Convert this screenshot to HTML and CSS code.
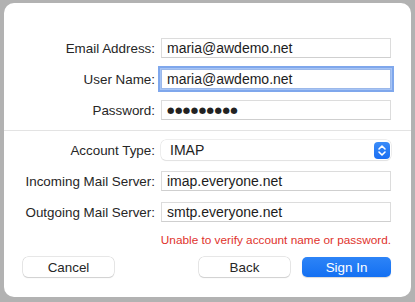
FILE: index.html
```html
<!DOCTYPE html>
<html lang="en">
<head>
    <meta charset="UTF-8">
    <meta name="viewport" content="width=device-width, initial-scale=1.0">
    <title>Add Account</title>
<link rel="stylesheet" href="styles.css">
</head>
<body>
    <div class="dialog">
        <div class="section">
            <div class="row">
                <label for="email">Email Address:</label>
                <input type="text" id="email" value="maria@awdemo.net">
            </div>
            <div class="row">
                <label for="userName">User Name:</label>
                <input type="text" id="userName" class="focused" value="maria@awdemo.net">
            </div>
            <div class="row">
                <label for="password">Password:</label>
                <input type="text" id="password" class="secret" value="●●●●●●●●●">
            </div>
        </div>

        <div class="separator"></div>

        <div class="section">
            <div class="row">
                <label>Account Type:</label>
                <div class="popup">
                    <span>IMAP</span>
                    <span class="popup-arrows">
                        <svg width="10" height="13" viewBox="0 0 10 13">
                            <path d="M2 5 L5 2 L8 5 M2 8 L5 11 L8 8" fill="none" stroke="#fff" stroke-width="1.6" stroke-linecap="round" stroke-linejoin="round"/>
                        </svg>
                    </span>
                </div>
            </div>
            <div class="row">
                <label for="incoming">Incoming Mail Server:</label>
                <input type="text" id="incoming" value="imap.everyone.net">
            </div>
            <div class="row">
                <label for="outgoing">Outgoing Mail Server:</label>
                <input type="text" id="outgoing" value="smtp.everyone.net">
            </div>
        </div>

        <div class="error">Unable to verify account name or password.</div>

        <div class="button-bar">
            <button class="button cancel">Cancel</button>
            <div class="button-group">
                <button class="button">Back</button>
                <button class="button primary">Sign In</button>
            </div>
        </div>
    </div>
</body>
</html>
```
FILE: styles.css
```css
body {
    margin: 0;
    padding: 3px 4px 0 4px;
    background-color: #b2b2b2;
    font-family: 'Liberation Sans', Arial, sans-serif;
    font-size: 13.4px;
    color: #222;
}

.dialog {
    width: 407px;
    height: 294px;
    box-sizing: border-box;
    background-color: #fff;
    border-radius: 10px;
    padding-top: 35px;
}

.section {
    display: flex;
    flex-direction: column;
    gap: 11px;
}

.row {
    display: flex;
    align-items: center;
    height: 20px;
}

label {
    width: 157px;
    text-align: right;
    padding-right: 6px;
    box-sizing: border-box;
    color: #262626;
}

input {
    width: 230px;
    height: 20px;
    box-sizing: border-box;
    border: 1px solid #dcdcdc;
    border-bottom-color: #cfcfcf;
    padding: 0 5px;
    font-family: inherit;
    font-size: 14px;
    color: #1c1c1c;
    outline: none;
    background: #fff;
}

input.secret {
    font-family: 'DejaVu Sans', sans-serif;
    font-size: 8.5px;
    letter-spacing: 0.5px;
    color: #222;
}

input.focused {
    box-shadow: 0 0 0 1px #a6c4f5, 0 0 0 3px #7fa7ec;
    border-color: #9bb8ea;
}

.separator {
    height: 1px;
    background-color: #e3e3e3;
    margin: 10px 0 9px 0;
}

.popup {
    width: 230px;
    height: 20px;
    box-sizing: border-box;
    display: flex;
    align-items: center;
    justify-content: space-between;
    padding: 0 1px 0 9px;
    border-radius: 5px;
    box-shadow: 0 0 0 0.5px #dedede, 0 1px 1px rgba(0, 0, 0, 0.1);
    background: #fff;
    font-size: 14px;
}

.popup-arrows {
    width: 16px;
    height: 17px;
    border-radius: 4px;
    background: linear-gradient(#3b8cf8, #1a6ef2);
    display: flex;
    align-items: center;
    justify-content: center;
}

.error {
    width: 387px;
    text-align: right;
    color: #e0322b;
    font-size: 11.8px;
    margin-top: 11px;
    height: 15px;
}

.button-bar {
    display: flex;
    justify-content: space-between;
    padding: 0 20px 0 19px;
    margin-top: 9px;
}

.button-group {
    display: flex;
    gap: 12px;
}

.button {
    width: 91px;
    height: 20px;
    padding: 0;
    font-family: inherit;
    font-size: 13.4px;
    color: #262626;
    background: #fff;
    border: none;
    border-radius: 5px;
    box-shadow: 0 0 0 0.5px #cfcfcf, 0 1px 1px rgba(0, 0, 0, 0.18);
}

.button.primary {
    width: 89px;
    color: #fff;
    background: linear-gradient(#2d84f7, #1470f2);
    box-shadow: 0 1px 1px rgba(0, 0, 0, 0.15);
}
```
